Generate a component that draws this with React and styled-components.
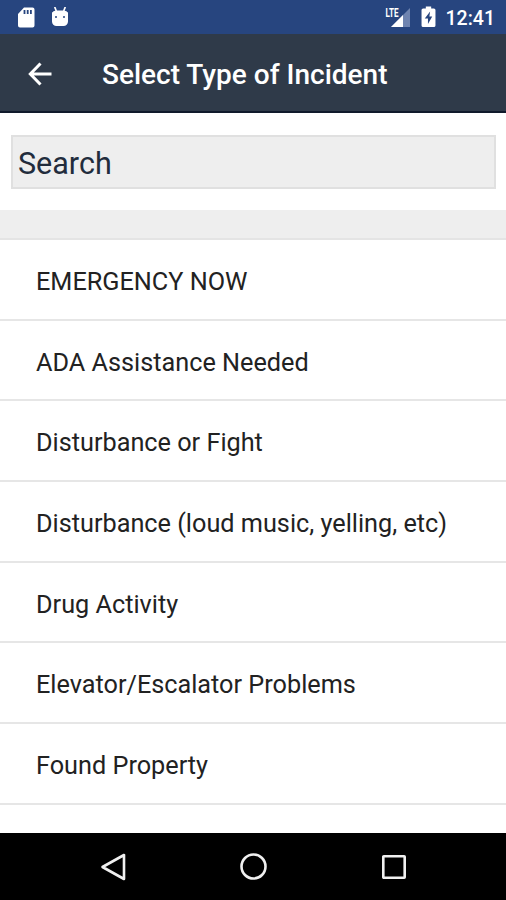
import styled, { createGlobalStyle } from "styled-components";

const GlobalStyle = createGlobalStyle`
  body {
    margin: 0;
    background: #ffffff;
    font-family: Roboto, "Noto Sans", sans-serif;
  }
`;

const Screen = styled.div`
  display: flex;
  flex-direction: column;
  width: 506px;
  height: 900px;
  overflow: hidden;
  background: #ffffff;
`;

const StatusBar = styled.div`
  box-sizing: border-box;
  height: 34px;
  flex-shrink: 0;
  display: flex;
  align-items: center;
  justify-content: space-between;
  padding: 0 11px 0 17px;
  background: #27457f;
  color: #ffffff;
`;

const StatusGroup = styled.div`
  display: flex;
  align-items: center;
  gap: ${({ $gap }) => $gap}px;
`;

const Clock = styled.span`
  font-size: 19.5px;
  font-weight: 500;
  line-height: 34px;
  padding-top: 3px;
`;

const Header = styled.header`
  box-sizing: border-box;
  height: 79px;
  flex-shrink: 0;
  display: flex;
  align-items: center;
  gap: 50px;
  padding: 2px 0 0 28px;
  background: #2f3a49;
  border-bottom: 2px solid #101a2b;
`;

const BackButton = styled.button`
  display: flex;
  padding: 0;
  border: none;
  background: none;
`;

const Title = styled.h1`
  margin: 0;
  padding-top: 3px;
  font-size: 28px;
  font-weight: 500;
  line-height: 32px;
  color: #ffffff;
`;

const SearchArea = styled.div`
  box-sizing: border-box;
  height: 97px;
  flex-shrink: 0;
  padding: 22px 10px 0 11px;
`;

const SearchInput = styled.input`
  box-sizing: border-box;
  display: block;
  width: 100%;
  height: 54px;
  padding: 2px 5px 0;
  border: 2px solid #e0e0e0;
  border-radius: 0;
  background: #eeeeee;
  font-family: inherit;
  font-size: 30.5px;
  outline: none;

  &::placeholder {
    color: #222c3c;
    opacity: 1;
  }
`;

const SectionGap = styled.div`
  box-sizing: border-box;
  height: 30px;
  flex-shrink: 0;
  background: #eeeeee;
  border-bottom: 2px solid #e4e4e4;
`;

const List = styled.ul`
  flex: 1;
  min-height: 0;
  margin: 0;
  padding: 0;
  overflow: hidden;
  list-style: none;
`;

const Item = styled.li`
  box-sizing: border-box;
  height: 80.7px;
  padding: 2px 36px 0;
  border-bottom: 2px solid #e6e6e6;
  font-size: 25.25px;
  line-height: 80px;
  color: #222222;
  white-space: nowrap;
`;

const NavBar = styled.nav`
  box-sizing: border-box;
  height: 67px;
  flex-shrink: 0;
  display: flex;
  align-items: center;
  justify-content: center;
  gap: 112px;
  padding-left: 1px;
  background: #000000;
`;

const incidents = [
  "EMERGENCY NOW",
  "ADA Assistance Needed",
  "Disturbance or Fight",
  "Disturbance (loud music, yelling, etc)",
  "Drug Activity",
  "Elevator/Escalator Problems",
  "Found Property",
];

const SdCardIcon = () => (
  <svg width="18" height="21" viewBox="0 0 18 21">
    <path
      fill="#fff"
      fillRule="evenodd"
      d="M7 0.5h8.5a2 2 0 0 1 2 2v16a2 2 0 0 1-2 2H3a2 2 0 0 1-2-2V7zM6.6 3v4h1.8V3zM9.8 3v4h1.8V3zM13 3v4h1.8V3z"
    />
  </svg>
);

const RobotIcon = () => (
  <svg width="18" height="21" viewBox="0 0 18 21">
    <path
      fill="#fff"
      fillRule="evenodd"
      d="M1 5.500h16v9a4.500 4.500 0 0 1-4.500 4.500h-7a4.500 4.500 0 0 1-4.500-4.500zM5 9a1 1 0 1 0 0 2 1 1 0 0 0 0-2zM13 9a1 1 0 1 0 0 2 1 1 0 0 0 0-2z"
    />
    <path fill="#fff" d="M1 6Q2 3.500 5 3.500h8Q16 3.500 17 6z" />
    <path stroke="#fff" strokeWidth="1.700" d="M3.700 0l1.600 4M14.300 0l-1.600 4" />
  </svg>
);

const SignalIcon = () => (
  <svg width="26" height="22" viewBox="0 0 26 22" overflow="visible">
    <path fill="#6f84b0" d="M25 2v19H6z" />
    <path fill="#fff" d="M18 9v12H6z" />
    <path fill="#27457f" d="M0 0h14v11H0z" />
    <text
      x="0.500"
      y="10.500"
      fill="#fff"
      fontFamily="Roboto, sans-serif"
      fontSize="12.500"
      fontWeight="700"
      textLength="13"
      lengthAdjust="spacingAndGlyphs"
    >
      LTE
    </text>
  </svg>
);

const BatteryIcon = () => (
  <svg width="15" height="22" viewBox="0 0 14 22" preserveAspectRatio="none">
    <path
      fill="#fff"
      fillRule="evenodd"
      d="M4.500 0.500h5v2h2.500a1.500 1.500 0 0 1 1.500 1.500v15.500a1.500 1.500 0 0 1-1.500 1.500H2a1.500 1.500 0 0 1-1.500-1.500V4A1.500 1.500 0 0 1 2 2.500h2.500zM8.500 5.500l-5 7h3v5.500l4-7.500H7.800z"
    />
  </svg>
);

const BackArrowIcon = () => (
  <svg width="24" height="24" viewBox="0 0 24 24" fill="none">
    <path stroke="#fff" strokeWidth="3" d="M23.500 12H3M12.500 1.500L2.300 12L12.500 22.500" />
  </svg>
);

const App = () => {
  return (
    <>
      <GlobalStyle />
      <Screen>
        <StatusBar>
          <StatusGroup $gap={16}>
            <SdCardIcon />
            <RobotIcon />
          </StatusGroup>
          <StatusGroup $gap={10}>
            <SignalIcon />
            <BatteryIcon />
            <Clock>12:41</Clock>
          </StatusGroup>
        </StatusBar>

        <Header>
          <BackButton aria-label="Back">
            <BackArrowIcon />
          </BackButton>
          <Title>Select Type of Incident</Title>
        </Header>

        <SearchArea>
          <SearchInput placeholder="Search" />
        </SearchArea>
        <SectionGap />

        <List>
          {incidents.map((incident) => (
            <Item key={incident}>{incident}</Item>
          ))}
        </List>

        <NavBar>
          <svg width="28" height="28" viewBox="0 0 28 28" fill="none">
            <path
              stroke="#f0f0f0"
              strokeWidth="2.600"
              strokeLinejoin="round"
              d="M24 2v24L2.500 14z"
            />
          </svg>
          <svg width="28" height="28" viewBox="0 0 28 28" fill="none">
            <circle cx="13.500" cy="13.500" r="12" stroke="#f0f0f0" strokeWidth="2.600" />
          </svg>
          <svg width="28" height="28" viewBox="0 0 28 28" fill="none">
            <rect
              x="3.300"
              y="3.300"
              width="21.400"
              height="21.400"
              rx="0.500"
              stroke="#f0f0f0"
              strokeWidth="2.600"
            />
          </svg>
        </NavBar>
      </Screen>
    </>
  );
};

export default App;
